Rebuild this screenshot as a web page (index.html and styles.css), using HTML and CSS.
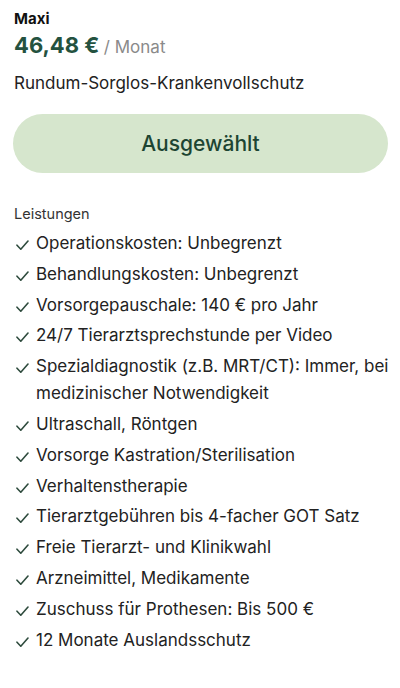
FILE: index.html
```html
<!DOCTYPE html>
<html lang="de">
<head>
<meta charset="UTF-8">
<link rel="stylesheet" href="styles.css">
<title>Maxi</title>
</head>
<body>
<div class="plan">
  <div class="plan-name">Maxi</div>
  <div class="plan-price"><span class="amount">46,48 €</span> <span class="period">/ Monat</span></div>
  <p class="plan-desc">Rundum-Sorglos-Krankenvollschutz</p>

  <button type="button" class="select-btn">Ausgewählt</button>

  <div class="features-title">Leistungen</div>
  <ul class="features">
    <li><svg class="check" viewBox="0 0 13 10"><path d="M1 5.2 L4.8 9.2 L12 1"/></svg><span>Operationskosten: Unbegrenzt</span></li>
    <li><svg class="check" viewBox="0 0 13 10"><path d="M1 5.2 L4.8 9.2 L12 1"/></svg><span>Behandlungskosten: Unbegrenzt</span></li>
    <li><svg class="check" viewBox="0 0 13 10"><path d="M1 5.2 L4.8 9.2 L12 1"/></svg><span>Vorsorgepauschale: 140 € pro Jahr</span></li>
    <li><svg class="check" viewBox="0 0 13 10"><path d="M1 5.2 L4.8 9.2 L12 1"/></svg><span>24/7 Tierarztsprechstunde per Video</span></li>
    <li><svg class="check" viewBox="0 0 13 10"><path d="M1 5.2 L4.8 9.2 L12 1"/></svg><span>Spezialdiagnostik (z.B. MRT/CT): Immer, bei medizinischer Notwendigkeit</span></li>
    <li><svg class="check" viewBox="0 0 13 10"><path d="M1 5.2 L4.8 9.2 L12 1"/></svg><span>Ultraschall, Röntgen</span></li>
    <li><svg class="check" viewBox="0 0 13 10"><path d="M1 5.2 L4.8 9.2 L12 1"/></svg><span>Vorsorge Kastration/Sterilisation</span></li>
    <li><svg class="check" viewBox="0 0 13 10"><path d="M1 5.2 L4.8 9.2 L12 1"/></svg><span>Verhaltenstherapie</span></li>
    <li><svg class="check" viewBox="0 0 13 10"><path d="M1 5.2 L4.8 9.2 L12 1"/></svg><span>Tierarztgebühren bis 4-facher GOT Satz</span></li>
    <li><svg class="check" viewBox="0 0 13 10"><path d="M1 5.2 L4.8 9.2 L12 1"/></svg><span>Freie Tierarzt- und Klinikwahl</span></li>
    <li><svg class="check" viewBox="0 0 13 10"><path d="M1 5.2 L4.8 9.2 L12 1"/></svg><span>Arzneimittel, Medikamente</span></li>
    <li><svg class="check" viewBox="0 0 13 10"><path d="M1 5.2 L4.8 9.2 L12 1"/></svg><span>Zuschuss für Prothesen: Bis 500 €</span></li>
    <li><svg class="check" viewBox="0 0 13 10"><path d="M1 5.2 L4.8 9.2 L12 1"/></svg><span>12 Monate Auslandsschutz</span></li>
  </ul>
</div>
</body>
</html>
```

FILE: styles.css
```css
/* page */
body {
  margin: 0;
  background: #ffffff;
  font-family: "Inter", "Noto Sans", sans-serif;
  color: #1f1f1f;
}

.plan {
  padding: 9px 11px 0 14px;
}

/* header: name, price, description */
.plan-name {
  font-size: 15px;
  font-weight: 700;
  line-height: 20px;
  color: #111;
}

.plan-price {
  line-height: 32px;
  margin-top: 0;
}

.plan-price .amount {
  font-size: 22px;
  font-weight: 700;
  color: #24523f;
}

.plan-price .period {
  font-size: 17px;
  color: #8a8a8a;
}

.plan-desc {
  margin: 9px 0 0 0;
  font-size: 17px;
  line-height: 22px;
  color: #222;
}

/* selected button */
.select-btn {
  display: block;
  width: 100%;
  height: 59px;
  margin: 20px 0 0 -1px;
  border: none;
  border-radius: 30px;
  background-color: #d6e6cd;
  color: #1d4532;
  font-family: inherit;
  font-size: 21px;
  font-weight: 500;
}

/* features list */
.features-title {
  margin-top: 31px;
  font-size: 14.5px;
  line-height: 20px;
  color: #333;
}

.features {
  list-style: none;
  margin: 6px 0 0 0;
  padding: 0;
}

.features li {
  display: flex;
  align-items: flex-start;
  font-size: 17px;
  line-height: 27px;
  color: #222;
  margin-bottom: 3.8px;
}

.features .check {
  flex: none;
  width: 13px;
  height: 10px;
  margin: 10px 7px 0 2px;
  fill: none;
  stroke: #2e4b3d;
  stroke-width: 1.6;
  stroke-linecap: round;
  stroke-linejoin: round;
}
```
